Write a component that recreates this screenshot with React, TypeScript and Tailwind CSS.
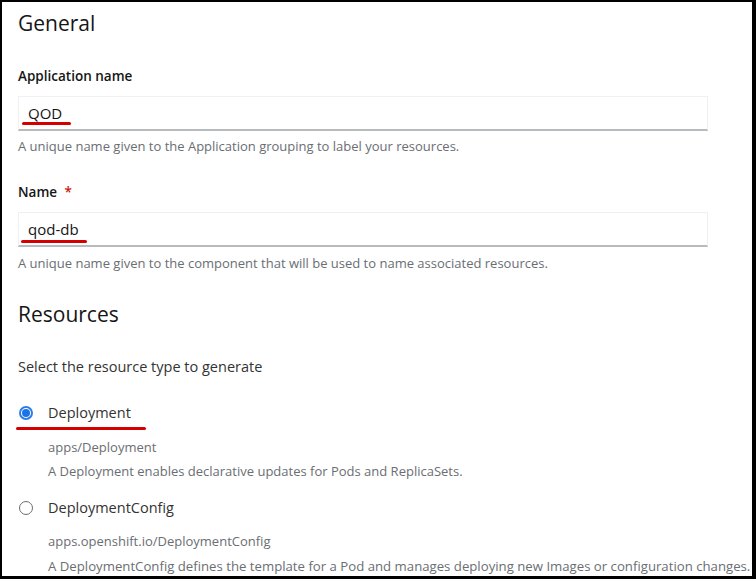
import React from 'react';

const body = "font-['Open_Sans',_'Liberation_Sans',_sans-serif]";

function TextInput({ value, mark }: { value: string; mark: string }) {
    return (
        <div className="relative mr-[44px] h-[35px] border border-[#f0f0f0] border-b-[#b8bbbe] border-b-2 bg-white flex items-center pl-[9px] text-[15px] text-[#151515]">
            {value}
            <div className={`absolute h-[3px] bg-[#d40000] rounded-full ${mark}`} />
        </div>
    );
}

function Radio({ checked }: { checked?: boolean }) {
    return checked ? (
        <span className="shrink-0 w-[14px] h-[14px] rounded-full border-2 border-[#2b7de9] flex items-center justify-center bg-white">
            <span className="block w-[8px] h-[8px] rounded-full bg-[#1a73e8]" />
        </span>
    ) : (
        <span className="shrink-0 block w-[14px] h-[14px] rounded-full border border-[#6a6e73] bg-white" />
    );
}

export default function App() {
    return (
        <div className={`w-[756px] h-[579px] overflow-hidden bg-white border-t-2 border-l-2 border-r-4 border-b-[3px] border-black ${body}`}>
            <div className="pl-[16px] pt-[7px] whitespace-nowrap">
                {/* General */}
                <h2 className="text-[21px] leading-[28px] text-[#151515]">General</h2>

                <div className="mt-[29px] text-[13.5px] leading-[20px] font-semibold text-[#151515]">Application name</div>
                <div className="mt-[10px]">
                    <TextInput value="QOD" mark="left-[3px] top-[25px] w-[49px]" />
                </div>
                <p className="mt-[5px] text-[13px] leading-[20px] text-[#6a6e73]">
                    A unique name given to the Application grouping to label your resources.
                </p>

                <div className="mt-[26px] text-[13.5px] leading-[20px] font-semibold text-[#151515]">
                    Name <span className="ml-[4px] text-[#c9190b]">*</span>
                </div>
                <div className="mt-[10px]">
                    <TextInput value="qod-db" mark="left-[2px] top-[27px] w-[66px]" />
                </div>
                <p className="mt-[6px] text-[13px] leading-[20px] text-[#6a6e73]">
                    A unique name given to the component that will be used to name associated resources.
                </p>

                {/* Resources */}
                <h2 className="mt-[27px] text-[21px] leading-[28px] text-[#151515]">Resources</h2>
                <p className="mt-[29px] text-[14.5px] leading-[20px] text-[#333]">Select the resource type to generate</p>

                <div className="relative mt-[25px] flex items-center h-[22px]">
                    <span className="ml-[1px]"><Radio checked /></span>
                    <span className="ml-[15px] text-[14.5px] text-[#333]">Deployment</span>
                    <div className="absolute left-[-2px] top-[25px] w-[130px] h-[3px] bg-[#d40000] rounded-full" />
                </div>
                <div className="pl-[30px]">
                    <p className="mt-[13px] text-[13px] leading-[20px] text-[#6a6e73]">apps/Deployment</p>
                    <p className="mt-[4px] text-[13px] leading-[20px] text-[#6a6e73]">
                        A Deployment enables declarative updates for Pods and ReplicaSets.
                    </p>
                </div>

                <div className="mt-[16px] flex items-center h-[22px]">
                    <span className="ml-[1px]"><Radio /></span>
                    <span className="ml-[15px] text-[14.5px] text-[#333]">DeploymentConfig</span>
                </div>
                <div className="pl-[30px]">
                    <p className="mt-[12px] text-[13px] leading-[20px] text-[#6a6e73]">apps.openshift.io/DeploymentConfig</p>
                    <p className="mt-[5px] text-[13.2px] leading-[20px] text-[#6a6e73]">
                        A DeploymentConfig defines the template for a Pod and manages deploying new Images or configuration changes.
                    </p>
                </div>
            </div>
        </div>
    );
}
